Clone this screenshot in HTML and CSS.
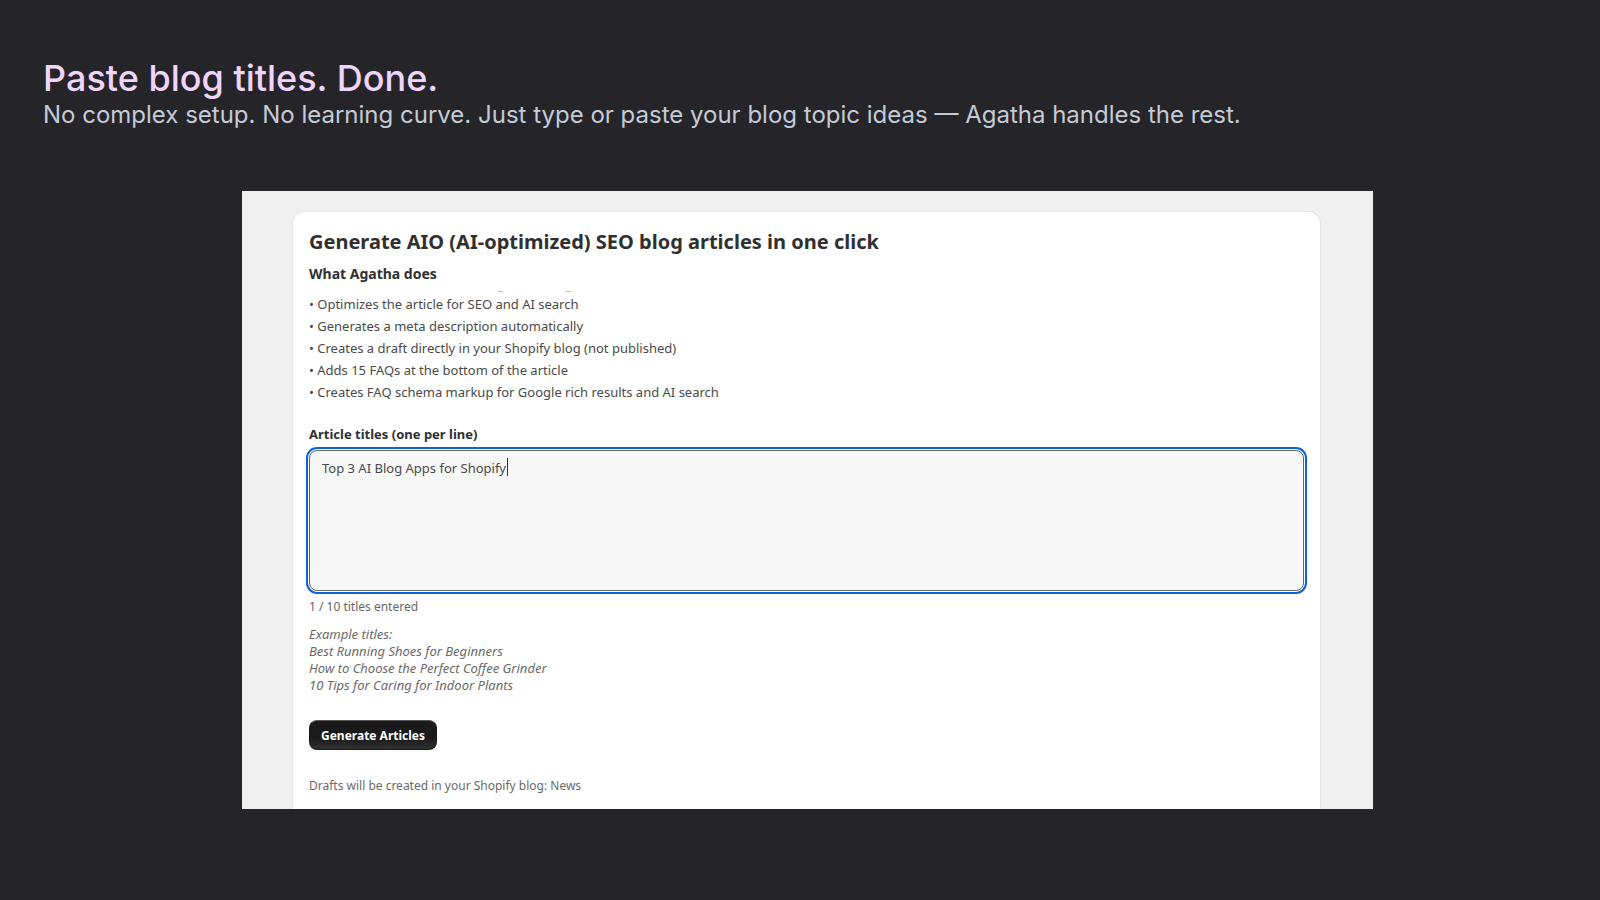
FILE: index.html
```html
<!DOCTYPE html>
<html lang="en">
<head>
  <meta charset="UTF-8">
  <meta name="viewport" content="width=device-width, initial-scale=1.0">
  <title>Agatha - Paste blog titles. Done.</title>
  <link rel="stylesheet" href="styles.css">
</head>
<body>
  <header>
    <h1>Paste blog titles. Done.</h1>
    <p>No complex setup. No learning curve. Just type or paste your blog topic ideas — Agatha handles the rest.</p>
  </header>

  <!-- App preview -->
  <main class="preview">
    <section class="card">
      <h2>Generate AIO (AI-optimized) SEO blog articles in one click</h2>
      <h3>What Agatha does</h3>
      <ul class="features">
        <li>Optimizes the article for SEO and AI search</li>
        <li>Generates a meta description automatically</li>
        <li>Creates a draft directly in your Shopify blog (not published)</li>
        <li>Adds 15 FAQs at the bottom of the article</li>
        <li>Creates FAQ schema markup for Google rich results and AI search</li>
      </ul>

      <form>
        <label for="titles">Article titles (one per line)</label>
        <div class="field">
          <textarea id="titles" name="titles" spellcheck="false">Top 3 AI Blog Apps for Shopify</textarea>
          <span class="caret"></span>
        </div>
        <p class="count">1 / 10 titles entered</p>
        <p class="examples">
          Example titles:<br>
          Best Running Shoes for Beginners<br>
          How to Choose the Perfect Coffee Grinder<br>
          10 Tips for Caring for Indoor Plants
        </p>
        <button type="button">Generate Articles</button>
      </form>
      <p class="note">Drafts will be created in your Shopify blog: News</p>
    </section>
  </main>
</body>
</html>
```
FILE: styles.css
```css
/* Global Styles */
* { box-sizing: border-box; }
body {
  margin: 0;
  background: #252429;
  font-family: Inter, sans-serif;
}
h1, h2, h3, p, ul { margin: 0; }

/* Header */
header { padding: 60px 43px 0; }
header h1 {
  color: #f0d5fa;
  font-size: 36px;
  font-weight: 500;
  line-height: 36px;
}
header p {
  color: #c4cbd6;
  font-size: 24px;
  line-height: 38px;
}

/* App preview */
.preview {
  margin: 57px 227px 0 242px;
  padding: 21px 53px 0 51px;
  background: #f0f0f0;
  font-family: "Noto Sans", sans-serif;
  font-size: 13px;
  color: #4a4a4a;
}
.card {
  padding: 16px 16px 12px;
  background: #fff;
  border-radius: 12px 12px 0 0;
  box-shadow: 0 0 0 1px #e4e4e4;
}
.card h2 {
  color: #303030;
  font-size: 20px;
  line-height: 28px;
}
.card h3 {
  margin-top: 8px;
  color: #303030;
  font-size: 14px;
  line-height: 20px;
}

/* Feature list */
.features {
  position: relative;
  margin-top: 9px;
  padding: 0;
  list-style: none;
  line-height: 22px;
}
.features li::before { content: "• "; }
.features::before,
.features::after {
  content: "";
  position: absolute;
  top: -2px;
  left: 189px;
  width: 5px;
  height: 1px;
  background: #bbb;
}
.features::after { left: 257px; }

/* Form */
label {
  display: block;
  margin-top: 20px;
  color: #303030;
  font-weight: 700;
  line-height: 22px;
}
.field { position: relative; margin-top: 5px; }
textarea {
  display: block;
  width: 100%;
  height: 141px;
  padding: 6px 12px;
  background: #f7f7f7;
  border: 1px solid #666;
  border-radius: 8px;
  outline: 2px solid #0b63dc;
  outline-offset: 1px;
  color: #4a4a4a;
  font: inherit;
  line-height: 22px;
  resize: none;
}
.caret {
  position: absolute;
  top: 8px;
  left: 198px;
  width: 1px;
  height: 18px;
  background: #303030;
}
.count {
  margin-top: 5px;
  color: #666;
  font-size: 12px;
  line-height: 22px;
}
.examples {
  margin-top: 8px;
  color: #6a6a6a;
  font-size: 13px;
  font-style: italic;
  line-height: 17px;
}
button {
  display: block;
  height: 30px;
  margin-top: 26px;
  padding: 0 11px;
  background: linear-gradient(#1a1a1a 60%, #303030);
  border: 1px solid #1a1a1a;
  border-top-color: #555;
  border-radius: 8px;
  color: #fff;
  font-family: inherit;
  font-size: 12px;
  font-weight: 700;
}
.note {
  margin-top: 25px;
  color: #6a6a6a;
  font-size: 12px;
  line-height: 22px;
}
```
